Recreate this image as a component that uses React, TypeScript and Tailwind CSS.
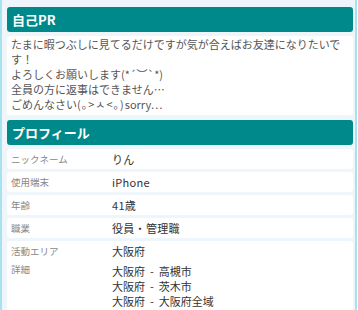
const rows = [
  { label: "ニックネーム", value: "りん" },
  { label: "使用端末", value: "iPhone" },
  { label: "年齢", value: "41歳" },
  { label: "職業", value: "役員・管理職" },
];

const details = ["高槻市", "茨木市", "大阪府全域"];

function SectionHeader({ title }: { title: string }) {
  return (
    <h2 className="flex h-[25px] items-center rounded-[3px] bg-[#00898a] pl-[5px] text-[13px] font-bold text-white">
      {title}
    </h2>
  );
}

export default function App() {
  return (
    <div
      className="w-[357px] border-x-2 border-[#a6e3ee] bg-[#eef5fb] pb-4 pl-[5px] pr-[2px] pt-[7px]"
      style={{ fontFamily: '"Noto Sans CJK JP", "Noto Sans", sans-serif' }}
    >
      {/* 自己PR */}
      <section>
        <SectionHeader title="自己PR" />
        <div className="mt-[4px] rounded-[3px] bg-white px-[4px] pb-[3px] pt-[1px] text-[11px] leading-[15px] text-[#555]">
          <p>たまに暇つぶしに見てるだけですが気が合えばお友達になりたいです！</p>
          <p>よろしくお願いします(*´︶`*)</p>
          <p>全員の方に返事はできません…</p>
          <p>
            ごめんなさい<span className="tracking-[1px]">(｡&gt;ㅅ&lt;｡)</span>sorry…
          </p>
        </div>
      </section>

      {/* プロフィール */}
      <section className="mt-[5px]">
        <SectionHeader title="プロフィール" />
        <div className="mt-[4px] flex flex-col gap-[3px]">
          {rows.map((r) => (
            <div
              key={r.label}
              className="grid h-[20px] grid-cols-[101px_1fr] items-center rounded-[3px] bg-white pl-[4px]"
            >
              <span className="text-[9.5px] text-[#888]">{r.label}</span>
              <span className="text-[11px] tracking-[0.3px] text-[#333]">{r.value}</span>
            </div>
          ))}
          <div className="rounded-[3px] bg-white pb-[6px] pl-[4px] pt-[1px]">
            <div className="grid h-[18px] grid-cols-[101px_1fr] items-center">
              <span className="text-[9.5px] text-[#888]">活動エリア</span>
              <span className="text-[11px] text-[#333]">大阪府</span>
            </div>
            <div className="mt-[4px] grid grid-cols-[101px_1fr] items-start">
              <span className="pt-[1px] text-[9.5px] leading-[8px] text-[#888]">詳細</span>
              <div className="flex flex-col text-[11px] leading-[15px] text-[#333]">
                {details.map((d) => (
                  <span key={d}>
                    大阪府<span className="mx-[5px]">-</span>
                    {d}
                  </span>
                ))}
              </div>
            </div>
          </div>
        </div>
      </section>
    </div>
  );
}
